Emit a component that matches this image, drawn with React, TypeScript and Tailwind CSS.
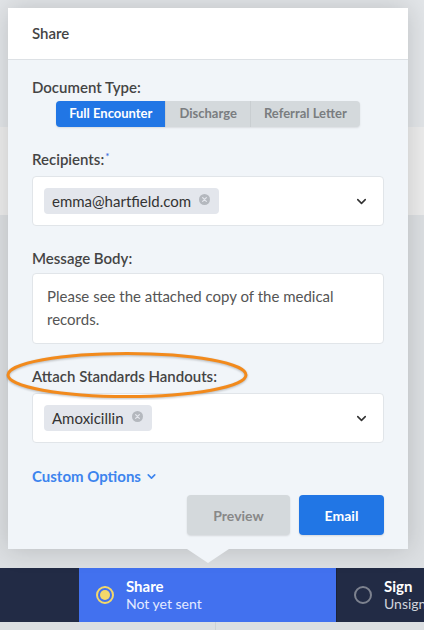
import { ChevronDown } from "lucide-react"

function ChipX() {
  return (
    <svg width="11" height="11" viewBox="0 0 12 12" className="mt-[-4px]">
      <circle cx="6" cy="6" r="6" fill="#b4b8be" />
      <path d="M4 4 L8 8 M8 4 L4 8" stroke="#e3e6ec" strokeWidth="1.4" strokeLinecap="round" />
    </svg>
  )
}

function Chip({ label }: { label: string }) {
  return (
    <div className="flex h-[26px] items-center gap-[8px] rounded bg-[#e3e6ec] pl-[8px] pr-[9px] text-[15px] text-[#333]">
      <span>{label}</span>
      <ChipX />
    </div>
  )
}

function SelectBox({ label }: { label: string }) {
  return (
    <div className="flex h-[50px] items-center justify-between rounded border border-[#e1e5e9] bg-white pl-[11px] pr-[14px]">
      <Chip label={label} />
      <ChevronDown className="h-[15px] w-[15px] text-[#333]" strokeWidth={2.5} />
    </div>
  )
}

export default function App() {
  const tabs = ["Full Encounter", "Discharge", "Referral Letter"]

  return (
    <div
      className="relative h-[630px] w-[424px] overflow-hidden bg-[#dcdfe2]"
      style={{ fontFamily: "Lato, 'Noto Sans', sans-serif" }}
    >
      {/* background page */}
      <div className="flex h-full flex-col">
        <div className="h-[127px] bg-[#e2e5e8]" />
        <div className="h-[88px] bg-[#ececec]" />
        <div className="flex-1 bg-[#dcdfe2]" />
        <div className="flex h-[54px] shrink-0 bg-[#222b45]">
          <div className="w-[79px] shrink-0" />
          <div className="flex w-[257px] shrink-0 items-center gap-[12px] bg-[#4271ef] pl-[17px]">
            <div className="flex h-[18px] w-[18px] items-center justify-center rounded-full border-[2px] border-[#f3d86a]">
              <div className="h-[10px] w-[10px] rounded-full bg-[#f3d86a]" />
            </div>
            <div className="leading-[18px] text-white">
              <div className="text-[15px] font-bold">Share</div>
              <div className="text-[14px] text-[#e4eaff]">Not yet sent</div>
            </div>
          </div>
          <div className="flex shrink-0 items-center gap-[12px] border-l border-[#1b2238] pl-[17px]">
            <div className="h-[18px] w-[18px] rounded-full border-[2px] border-[#7d828f]" />
            <div className="leading-[18px] text-white">
              <div className="text-[15px] font-bold">Sign</div>
              <div className="whitespace-nowrap text-[14px] text-[#d0d4dc]">Unsigned</div>
            </div>
          </div>
        </div>
        <div className="flex h-[8px] shrink-0">
          <div className="w-[215px]" />
          <div className="w-px bg-[#cfd2d5]" />
        </div>
      </div>

      {/* share popover */}
      <div className="absolute left-[8px] top-[8px] w-[400px] shadow-[0_0_24px_rgba(0,0,0,0.16)]">
        <div className="flex h-[52px] items-center border-b border-[#dde1e5] bg-white px-[24px] text-[15px] font-semibold text-[#444]">
          Share
        </div>
        <div className="bg-[#f1f5f9] px-[24px] pb-[14px] pt-[17px] text-[#444]">
          <div className="text-[15px] font-semibold leading-[20px]">Document Type:</div>
          <div className="mt-[4px] flex justify-center">
            <div className="flex h-[26px] overflow-hidden rounded bg-[#d4d9dc] shadow-[0_1px_2px_rgba(0,0,0,0.1)]">
              {tabs.map((t, i) => (
                <div
                  key={t}
                  className={`flex items-center px-[13px] text-[13px] font-bold ${
                    i === 0 ? "bg-[#2176e5] text-white" : "border-l border-[#c9ced1] text-[#7a7d80]"
                  }`}
                >
                  {t}
                </div>
              ))}
            </div>
          </div>

          <div className="mt-[22px] text-[15px] font-semibold leading-[20px]">
            Recipients:<sup className="ml-[1px] text-[10px] text-[#3b6fe0]">*</sup>
          </div>
          <div className="mt-[7px]">
            <SelectBox label="emma@hartfield.com" />
          </div>

          <div className="mt-[22px] text-[15px] font-semibold leading-[20px]">Message Body:</div>
          <div className="mt-[5px] h-[71px] rounded border border-[#e1e5e9] bg-white px-[14px] pt-[11px] text-[15px] leading-[23px] text-[#555]">
            Please see the attached copy of the medical records.
          </div>

          <div className="relative mt-[22px] text-[15px] font-semibold leading-[20px]">
            Attach Standards Handouts:
            <svg
              className="pointer-events-none absolute left-[-26px] top-[-14px]"
              width="244"
              height="48"
              viewBox="0 0 244 48"
            >
              <ellipse
                cx="121"
                cy="23"
                rx="119"
                ry="21.5"
                fill="none"
                stroke="#f28a1c"
                strokeWidth="3"
                style={{ filter: "drop-shadow(0 1px 1px rgba(0,0,0,0.25))" }}
              />
            </svg>
          </div>
          <div className="mt-[7px]">
            <SelectBox label="Amoxicillin" />
          </div>

          <div className="mt-[23px] flex items-center gap-[4px] text-[15px] font-bold leading-[20px] text-[#3d84ee]">
            Custom Options
            <ChevronDown className="h-[13px] w-[13px]" strokeWidth={3} />
          </div>

          <div className="mt-[9px] flex justify-end gap-[9px]">
            <button className="h-[40px] w-[103px] rounded bg-[#d4d9dc] text-[14px] font-bold text-[#888] shadow-[0_1px_2px_rgba(0,0,0,0.12)]">
              Preview
            </button>
            <button className="h-[40px] w-[85px] rounded bg-[#2176e5] text-[14px] font-bold text-white shadow-[0_1px_2px_rgba(0,0,0,0.12)]">
              Email
            </button>
          </div>
        </div>
        <div className="absolute bottom-[-14px] left-[179px] h-0 w-0 border-l-[21px] border-r-[21px] border-t-[14px] border-l-transparent border-r-transparent border-t-[#f1f5f9]" />
      </div>
    </div>
  )
}
